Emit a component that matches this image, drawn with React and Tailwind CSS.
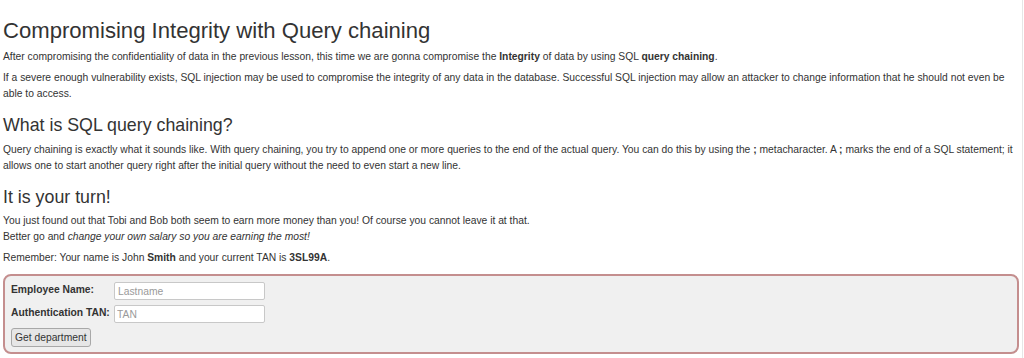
import React from "react";

export default function App() {
  return (
    <div className="h-[358px] w-[1024px] overflow-hidden bg-white">
      <div className="h-full w-[1023px] border-r border-[#e6e6e6] pl-[3px] pr-[1px] font-['Liberation_Sans',Arial,sans-serif] text-[10.3px] leading-[16px] text-[#333]">
        <h1 className="pt-[18px] text-[22.1px] leading-[25px] font-normal text-[#333]">
          Compromising Integrity with Query chaining
        </h1>
        <p className="mt-[6px]">
          After compromising the confidentiality of data in the previous lesson, this time we are gonna compromise the{" "}
          <b>Integrity</b> of data by using SQL <b>query chaining</b>.
        </p>
        <p className="mt-[5px]">
          If a severe enough vulnerability exists, SQL injection may be used to compromise the integrity of any data in the database.
          Successful SQL injection may allow an attacker to change information that he should not even be able to access.
        </p>
        <h2 className="mt-[13px] text-[17.8px] leading-[20px] font-normal">What is SQL query chaining?</h2>
        <p className="mt-[7px]">
          Query chaining is exactly what it sounds like. With query chaining, you try to append one or more queries to the end of
          the actual query. You can do this by using the <b>;</b> metacharacter. A <b>;</b> marks the end of a SQL statement; it
          allows one to start another query right after the initial query without the need to even start a new line.
        </p>
        <h2 className="mt-[13px] text-[17.8px] leading-[20px] font-normal">It is your turn!</h2>
        <p className="mt-[6px]">
          You just found out that Tobi and Bob both seem to earn more money than you! Of course you cannot leave it at that.
          <br />
          Better go and <i>change your own salary so you are earning the most!</i>
        </p>
        <p className="mt-[5px]">
          Remember: Your name is John <b>Smith</b> and your current TAN is <b>3SL99A</b>.
        </p>
        <form
          className="mt-[8px] flex h-[80px] w-[1016px] flex-col rounded-[8px] border-2 border-[#c48e8e] bg-[#f0f0f0] pl-[6px] pt-[6px]"
          onSubmit={(e) => e.preventDefault()}
        >
          <div className="flex items-start">
            <label className="w-[103px] font-bold">Employee Name:</label>
            <input
              className="h-[18px] w-[151px] rounded-[2px] border border-[#c8c8c8] bg-white px-[3px] text-[10.3px] outline-none placeholder:text-[#9a9a9a]"
              placeholder="Lastname"
            />
          </div>
          <div className="mt-[5px] flex items-start">
            <label className="w-[103px] font-bold">Authentication TAN:</label>
            <input
              className="h-[18px] w-[151px] rounded-[2px] border border-[#c8c8c8] bg-white px-[2px] text-[10.3px] outline-none placeholder:text-[#9a9a9a]"
              placeholder="TAN"
            />
          </div>
          <div className="mt-[5px]">
            <button
              type="submit"
              className="h-[19px] rounded-[3px] border border-[#a8a8a8] bg-[#e6e6e6] px-[3px] text-[10.3px] leading-[16px] text-[#333]"
            >
              Get department
            </button>
          </div>
        </form>
      </div>
    </div>
  );
}
